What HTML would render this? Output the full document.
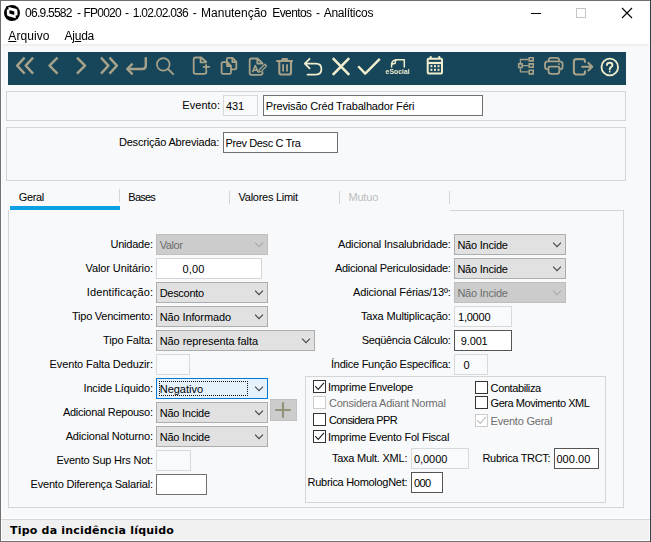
<!DOCTYPE html>
<html lang="pt-BR">
<head>
<meta charset="utf-8">
<title>Manutenção Eventos - Analíticos</title>
<style>
*{box-sizing:border-box;margin:0;padding:0}
html,body{width:651px;height:542px;overflow:hidden;background:#f8f9fa}
body{position:relative;font-family:"Liberation Sans",sans-serif;font-size:11px;color:#000;line-height:13px}
.a{position:absolute}
.t{position:absolute;white-space:nowrap;height:13px;line-height:13px}
.t u{text-decoration:underline;text-underline-offset:1px}
#toolbar{left:8px;top:52px;width:618px;height:33px;background:#17465b}
.panel{border:1px solid #d4d5d7}
.in{position:absolute;height:21px;background:#fff;border:1px solid #707070}
.in.ro{border-color:#d8d9da;background:#f9fafb}
.cb{position:absolute;height:21px;background:#e1e1e1;border:1px solid #adadad}
.cb.dis{background:#cccccc;border-color:#bfbfbf}
.cb.foc{background:#e5f1fb;border-color:#0078d7}
.cb svg{position:absolute;right:3px;top:7px}
.ck{position:absolute;width:13px;height:13px;background:#fff;border:1px solid #333}
.ck.dis{border-color:#cccccc;background:#fff}
.ck svg{position:absolute;left:0;top:0}
.sep{position:absolute;width:1px;height:13px;top:191px;background:#d4d5d7}
.ic{position:absolute;top:52px;height:33px;overflow:visible}
.s1{fill:none;stroke:#a7a289;stroke-width:1.8;stroke-linecap:round;stroke-linejoin:round}
.nav{stroke-width:2.4;stroke-linecap:butt}
.s2{fill:none;stroke:#f0eecc;stroke-width:1.6;stroke-linecap:round;stroke-linejoin:round}
</style>
</head>
<body>
<!-- window frame -->
<div class="a" style="left:0;top:0;width:651px;height:542px;background:#707070"></div>
<div class="a" style="left:650px;top:0;width:1px;height:542px;background:#35404d"></div>
<div class="a" style="left:1px;top:1px;width:649px;height:540px;background:#fff"></div>
<div class="a" style="left:2px;top:1px;width:647px;height:539px;background:#f8f9fa"></div>
<div class="a" style="left:1px;top:1px;width:649px;height:43px;background:#fff"></div>
<div class="a" style="left:2px;top:520px;width:647px;height:20px;background:#f0f0f0"></div>
<div class="a" style="left:1px;top:518px;width:649px;height:1px;background:#fff"></div>
<div class="a" style="left:1px;top:519px;width:649px;height:1px;background:#d7d7d7"></div>


<div class="a" style="left:2px;top:44px;width:647px;height:2px;background:#f0f0f0"></div>

<!-- app icon -->
<svg class="a" style="left:3px;top:4px" width="18" height="18" viewBox="0 0 18 18">
  <circle cx="9" cy="9" r="8" fill="#000"/>
  <g transform="translate(9.15 8.5) skewY(15)">
    <rect x="-5.3" y="-4.6" width="10.6" height="9.3" rx="1.8" fill="#fff"/>
    <rect x="-2.8" y="-1.6" width="5" height="3.5" rx=".7" fill="#000"/>
  </g>
  <rect x="3.2" y="2.2" width="2.3" height="3.3" fill="#000"/>
  <rect x="12.7" y="11.4" width="2.4" height="3.2" fill="#000"/>
</svg>

<!-- window buttons -->
<div class="a" style="left:531px;top:13px;width:10px;height:1px;background:#000"></div>
<div class="a" style="left:576px;top:8px;width:10px;height:10px;border:1px solid #c4c4c4"></div>
<svg class="a" style="left:621px;top:7px" width="12" height="12" viewBox="0 0 12 12"><path d="M1 1 L11 11 M11 1 L1 11" stroke="#000" stroke-width="1.1" fill="none"/></svg>

<!-- toolbar -->
<div class="a" id="toolbar"></div>
<svg class="a" style="left:0;top:0;will-change:transform" width="651" height="90" viewBox="0 0 651 90">
  <!-- first -->
  <path class="s1 nav" d="M24.6 57.6 L17.2 65.6 L24.6 73.6 M33.1 57.6 L25.7 65.6 L33.1 73.6"/>
  <!-- prev -->
  <path class="s1 nav" d="M57.5 57.6 L49.5 65.6 L57.5 73.6"/>
  <!-- next -->
  <path class="s1 nav" d="M77 57.6 L85 65.6 L77 73.6"/>
  <!-- last -->
  <path class="s1 nav" d="M101 57.6 L108.4 65.6 L101 73.6 M109.5 57.6 L116.9 65.6 L109.5 73.6"/>
  <!-- return -->
  <path class="s1 nav" d="M145.8 57.2 L145.8 65.5 Q145.8 69 142.3 69 L127.5 69 M132.6 63.7 L127.2 69 L132.6 74.3"/>
  <!-- search -->
  <circle class="s1" cx="163.3" cy="64.4" r="6.3" style="stroke-width:1.7"/>
  <path class="s1" style="stroke-width:1.8" d="M168 69 L173.2 74.2"/>
  <!-- new doc -->
  <path class="s1" d="M206.3 70.6 L206.3 72 Q206.3 73.9 204.4 73.9 L195.6 73.9 Q193.7 73.9 193.7 72 L193.7 59.4 Q193.7 57.5 195.6 57.5 L201.2 57.5 L206.3 62 M200.6 57.8 L200.6 62.4 L206 62.4"/>
  <path class="s1" style="stroke-linecap:butt" d="M202.8 66.9 L209.9 66.9 M206.1 64.2 L206.1 69.8"/>
  <!-- copy -->
  <path class="s1" d="M226.8 61.5 L226.8 59.3 Q226.8 57.9 228.2 57.9 L232.5 57.9 L236.3 61.7 L236.3 68 Q236.3 69.4 234.9 69.4 L231.3 69.4 M232.3 58.2 L232.3 62 L236 62"/>
  <path class="s1" d="M221.6 63.5 Q221.6 62.1 223 62.1 L227.3 62.1 L231 65.8 L231 72.4 Q231 73.8 229.6 73.8 L223 73.8 Q221.6 73.8 221.6 72.4 Z M227 62.4 L227 66 L230.7 66"/>
  <!-- edit doc -->
  <path class="s1" d="M262.5 72.2 L262.5 73 Q262.5 74.8 260.7 74.8 L251.5 74.8 Q249.7 74.8 249.7 73 L249.7 60.2 Q249.7 58.5 251.4 58.5 L257.5 58.5 L262.5 63.5 M257.3 58.8 L257.3 63.6 L262 63.6"/>
  <path class="s1" style="stroke-width:1.6;stroke-linecap:butt" d="M252.5 72.3 L255.3 65.6 L258.1 72.3 M253.4 70.2 L257.2 70.2"/>
  <path class="s1" style="stroke-width:1.3" d="M258.6 72.2 L259.2 69.8 L264.8 64.2 L266.6 66 L261 71.6 Z"/>
  <!-- trash -->
  <path class="s1" style="stroke-width:2;stroke-linecap:butt" d="M276.2 61 L292.9 61"/>
  <path d="M280.9 60.4 L282 58 L287.4 58 L288.5 60.4 Z" fill="#a7a289"/>
  <path class="s1" style="stroke-width:2.1" d="M279.3 61.6 L279.3 72.4 Q279.3 74.5 281.4 74.5 L288.9 74.5 Q291 74.5 291 72.4 L291 61.6"/>
  <path class="s1" style="stroke-width:1.8;stroke-linecap:butt" d="M283.1 64.2 L283.1 71.4 M287 64.2 L287 71.4"/>
  <!-- undo -->
  <path class="s2" style="stroke-width:1.8" d="M309.6 58.8 L304.8 63.6 L309.6 68.4 M305.2 63.6 L316 63.6 Q321.4 63.6 321.4 69.1 Q321.4 74.6 316 74.6 L307.5 74.6"/>
  <!-- cancel -->
  <path class="s2" style="stroke-width:2.6;stroke-linecap:butt" d="M332.8 58.2 L349.2 74.8 M349.2 58.2 L332.8 74.8"/>
  <!-- confirm -->
  <path class="s2" style="stroke-width:2.4;stroke-linecap:butt" d="M358.2 66.2 L365.2 73.6 L379.8 58.8"/>
  <!-- eSocial -->
  <path class="s2" style="stroke-width:1.5" d="M391.6 67 L391.6 64.4 Q391.8 60.4 396 59.7 L404.3 59.7 L404.3 67 M396.2 59.9 Q394.9 61 395.1 63.5 Q393.2 63.3 391.8 64.4"/>
  <text x="385.6" y="73.9" font-family="Liberation Sans, sans-serif" font-weight="bold" font-size="6.6" fill="#f0eecc" textLength="24.2" lengthAdjust="spacingAndGlyphs">eSocial</text>
  <!-- calendar -->
  <rect class="s2" style="stroke-width:2" x="427.7" y="58.7" width="14.3" height="14.8" rx="1"/>
  <path class="s2" style="stroke-width:2.2" d="M430.7 57 L430.7 58 M439.3 57 L439.3 58"/>
  <rect x="428" y="61.9" width="14" height="2.2" fill="#f0eecc"/>
  <g fill="#f0eecc">
    <rect x="430.4" y="65.2" width="2" height="2"/><rect x="434" y="65.2" width="2" height="2"/><rect x="437.5" y="65.2" width="2" height="2"/>
    <rect x="430.4" y="68.8" width="2" height="2"/><rect x="434" y="68.8" width="2" height="2"/><rect x="437.5" y="68.8" width="2" height="2"/>
  </g>
  <!-- hierarchy -->
  <path class="s1" style="stroke-width:1.6;stroke-linejoin:miter;stroke-linecap:butt" d="M518.7 63.9 H522.1 V67.5 H518.7 Z M529.2 57.8 H533.2 V60.9 H529.2 Z M529.2 63.9 H533.2 V67.2 H529.2 Z M529.2 70.2 H533.2 V73.9 H529.2 Z"/>
  <path class="s1" style="stroke-width:1.3;stroke-linejoin:miter;stroke-linecap:butt" d="M520.4 63.2 V59.5 H528.6 M522.8 65.6 H528.6 M520.4 68.2 V71.8 H528.6"/>
  <!-- print -->
  <path class="s1" d="M548.8 61 L548.8 60 Q548.8 57.8 551 57.8 L556.8 57.8 Q559 57.8 559 60 L559 61 M548.2 69.3 L547.6 69.3 Q545 69.3 545 66.7 L545 64.2 Q545 61.4 547.8 61.4 L559.8 61.4 Q562.6 61.4 562.6 64.2 L562.6 66.7 Q562.6 69.3 560 69.3 L559.4 69.3 M549.5 66.6 L558.3 66.6 Q559.3 66.6 559.3 67.6 L559.3 71.3 Q559.3 73.9 556.7 73.9 L551.1 73.9 Q548.5 73.9 548.5 71.3 L548.5 67.6 Q548.5 66.6 549.5 66.6 Z"/>
  <rect x="558.2" y="63.3" width="1.6" height="1.6" fill="#a7a289"/>
  <!-- exit -->
  <path class="s1" style="stroke-width:2.1" d="M585 62 L585 61.3 Q585 59.1 582.8 59.1 L576.3 59.1 Q573.9 59.1 573.9 61.5 L573.9 72.1 Q573.9 74.5 576.3 74.5 L582.8 74.5 Q585 74.5 585 72.3 L585 71.4 M582.2 66.7 L592 66.7 M588.4 63 L592.2 66.7 L588.4 70.4"/>
  <!-- help -->
  <circle class="s2" style="stroke-width:1.8" cx="609.8" cy="67" r="8.3"/>
  <path class="s2" style="stroke-width:1.9" d="M607 65 Q607 62.7 609.7 62.7 Q612.4 62.7 612.4 65 Q612.4 66.3 611 67.1 Q609.7 67.9 609.7 69.4"/>
  <rect x="608.9" y="70.8" width="1.6" height="1.6" fill="#f0eecc"/>
</svg>

<!-- panels -->
<div class="a panel" style="left:6px;top:91px;width:620px;height:30px"></div>
<div class="a panel" style="left:6px;top:127px;width:620px;height:54px"></div>
<div class="in ro" style="left:223px;top:95px;width:35px"></div>
<div class="in" style="left:263px;top:95px;width:220px"></div>
<div class="in" style="left:223px;top:132px;width:115px"></div>

<!-- tabs -->
<div class="sep" style="left:119px;top:189px"></div>
<div class="sep" style="left:229px"></div>
<div class="sep" style="left:339px"></div>
<div class="sep" style="left:449px"></div>
<div class="a" style="left:10px;top:206px;width:110px;height:4px;background:#0d9fe3"></div>

<!-- tab page -->
<div class="a" style="left:8px;top:210px;width:616px;height:298px;border:1px solid #d4d5d7;border-top:none"></div>
<div class="a" style="left:450px;top:210px;width:174px;height:1px;background:#d4d5d7"></div>

<!-- left column fields -->
<div class="cb dis" style="left:156px;top:234px;width:112px"><svg width="10" height="6" viewBox="0 0 10 6"><path d="M1.1 .7 L5 4.7 L9 .7" fill="none" stroke="#ababab" stroke-width="1.1"/></svg></div>
<div class="in ro" style="left:156px;top:258px;width:106px;background:#fff;border-color:#d4d5d7"></div>
<div class="cb" style="left:156px;top:282px;width:112px"><svg width="10" height="6" viewBox="0 0 10 6"><path d="M1.1 .7 L5 4.7 L9 .7" fill="none" stroke="#444" stroke-width="1.1"/></svg></div>
<div class="cb" style="left:156px;top:306px;width:112px"><svg width="10" height="6" viewBox="0 0 10 6"><path d="M1.1 .7 L5 4.7 L9 .7" fill="none" stroke="#444" stroke-width="1.1"/></svg></div>
<div class="cb" style="left:156px;top:330px;width:159px"><svg width="10" height="6" viewBox="0 0 10 6"><path d="M1.1 .7 L5 4.7 L9 .7" fill="none" stroke="#444" stroke-width="1.1"/></svg></div>
<div class="in ro" style="left:156px;top:354px;width:34px"></div>
<div class="cb foc" style="left:156px;top:378px;width:112px"><svg width="10" height="6" viewBox="0 0 10 6"><path d="M1.1 .7 L5 4.7 L9 .7" fill="none" stroke="#444" stroke-width="1.1"/></svg>
  <div class="a" style="left:2px;top:2px;width:89px;height:15px;border:1px dotted #111;border-radius:1px"></div></div>
<div class="cb" style="left:156px;top:402px;width:112px"><svg width="10" height="6" viewBox="0 0 10 6"><path d="M1.1 .7 L5 4.7 L9 .7" fill="none" stroke="#444" stroke-width="1.1"/></svg></div>
<div class="cb" style="left:156px;top:426px;width:112px"><svg width="10" height="6" viewBox="0 0 10 6"><path d="M1.1 .7 L5 4.7 L9 .7" fill="none" stroke="#444" stroke-width="1.1"/></svg></div>
<div class="in ro" style="left:156px;top:450px;width:35px"></div>
<div class="in" style="left:156px;top:474px;width:51px"></div>
<!-- plus button -->
<div class="a" style="left:270px;top:399px;width:27px;height:22px;background:#cccccc;border:1px solid #c2c2c2">
  <svg class="a" style="left:0;top:0" width="25" height="20" viewBox="0 0 25 20"><path d="M4.3 10 H19.7 M12 2.2 V17.8" stroke="#93937a" stroke-width="2.2" fill="none"/></svg>
</div>

<!-- right column fields -->
<div class="cb" style="left:454px;top:234px;width:112px"><svg width="10" height="6" viewBox="0 0 10 6"><path d="M1.1 .7 L5 4.7 L9 .7" fill="none" stroke="#444" stroke-width="1.1"/></svg></div>
<div class="cb" style="left:454px;top:258px;width:112px"><svg width="10" height="6" viewBox="0 0 10 6"><path d="M1.1 .7 L5 4.7 L9 .7" fill="none" stroke="#444" stroke-width="1.1"/></svg></div>
<div class="cb dis" style="left:454px;top:282px;width:112px"><svg width="10" height="6" viewBox="0 0 10 6"><path d="M1.1 .7 L5 4.7 L9 .7" fill="none" stroke="#ababab" stroke-width="1.1"/></svg></div>
<div class="in ro" style="left:454px;top:306px;width:58px"></div>
<div class="in" style="left:454px;top:330px;width:58px;border-color:#555"></div>
<div class="in ro" style="left:454px;top:354px;width:34px"></div>

<!-- group box -->
<div class="a" style="left:305px;top:376px;width:301px;height:127px;border:1px solid #d4d5d7"></div>
<div class="ck" style="left:313px;top:380px"><svg width="11" height="11" viewBox="0 0 11 11"><path d="M1.2 5.2 L4.2 8.4 L10 1.8" fill="none" stroke="#222" stroke-width="1.1"/></svg></div>
<div class="ck dis" style="left:313px;top:396px"></div>
<div class="ck" style="left:313px;top:413px"></div>
<div class="ck" style="left:313px;top:430px"><svg width="11" height="11" viewBox="0 0 11 11"><path d="M1.2 5.2 L4.2 8.4 L10 1.8" fill="none" stroke="#222" stroke-width="1.1"/></svg></div>
<div class="ck" style="left:475px;top:381px"></div>
<div class="ck" style="left:475px;top:396px"></div>
<div class="ck dis" style="left:475px;top:414px"><svg width="11" height="11" viewBox="0 0 11 11"><path d="M1.2 5.2 L4.2 8.4 L10 1.8" fill="none" stroke="#bdbdbd" stroke-width="1.1"/></svg></div>
<div class="in ro" style="left:411px;top:448px;width:58px"></div>
<div class="in" style="left:554px;top:448px;width:45px;border-color:#555"></div>
<div class="in" style="left:411px;top:472px;width:32px;border-color:#555"></div>

<div class="t" style="left:25.04px;top:5px;letter-spacing:-0.750px;font-size:12px;height:16px;line-height:16px">06.9.5582</div>
<div class="t" style="left:76.90px;top:5px;letter-spacing:0.000px;font-size:12px;height:16px;line-height:16px">-</div>
<div class="t" style="left:83.45px;top:5px;letter-spacing:-0.750px;font-size:12px;height:16px;line-height:16px">FP0020</div>
<div class="t" style="left:125.00px;top:5px;letter-spacing:0.000px;font-size:12px;height:16px;line-height:16px">-</div>
<div class="t" style="left:132.84px;top:5px;letter-spacing:-0.750px;font-size:12px;height:16px;line-height:16px">1.02.02.036</div>
<div class="t" style="left:192.80px;top:5px;letter-spacing:0.000px;font-size:12px;height:16px;line-height:16px">-</div>
<div class="t" style="left:201.10px;top:5px;letter-spacing:-0.019px;font-size:12px;height:16px;line-height:16px">Manutenção</div>
<div class="t" style="left:272.30px;top:5px;letter-spacing:-0.610px;font-size:12px;height:16px;line-height:16px">Eventos</div>
<div class="t" style="left:316.00px;top:5px;letter-spacing:0.000px;font-size:12px;height:16px;line-height:16px">-</div>
<div class="t" style="left:323.70px;top:5px;letter-spacing:-0.258px;font-size:12px;height:16px;line-height:16px">Analíticos</div>
<div class="t" style="left:8.30px;top:28px;letter-spacing:0.081px;font-size:12px;height:16px;line-height:16px"><u>A</u>rquivo</div>
<div class="t" style="left:64.60px;top:28px;letter-spacing:-0.254px;font-size:12px;height:16px;line-height:16px">Aj<u>u</u>da</div>
<div class="t" style="left:182.30px;top:99px;letter-spacing:0.059px">Evento:</div>
<div class="t" style="left:226.00px;top:100px;letter-spacing:-0.118px">431</div>
<div class="t" style="left:265.80px;top:100px;letter-spacing:-0.162px">Previsão Créd Trabalhador Féri</div>
<div class="t" style="left:118.90px;top:136px;letter-spacing:-0.184px">Descrição Abreviada:</div>
<div class="t" style="left:225.50px;top:137px;letter-spacing:-0.376px">Prev Desc C Tra</div>
<div class="t" style="left:18.70px;top:191px;letter-spacing:-0.364px">Geral</div>
<div class="t" style="left:128.31px;top:191px;letter-spacing:-0.750px">Bases</div>
<div class="t" style="left:238.60px;top:191px;letter-spacing:-0.275px">Valores Limit</div>
<div class="t" style="left:348.40px;top:191px;letter-spacing:-0.164px;color:#bbbcbe">Mutuo</div>
<div class="t" style="left:110.50px;top:238px;letter-spacing:-0.225px">Unidade:</div>
<div class="t" style="left:85.60px;top:262px;letter-spacing:-0.109px">Valor Unitário:</div>
<div class="t" style="left:86.80px;top:286px;letter-spacing:0.103px">Identificação:</div>
<div class="t" style="left:72.00px;top:310px;letter-spacing:-0.242px">Tipo Vencimento:</div>
<div class="t" style="left:103.00px;top:334px;letter-spacing:-0.160px">Tipo Falta:</div>
<div class="t" style="left:49.60px;top:358px;letter-spacing:-0.121px">Evento Falta Deduzir:</div>
<div class="t" style="left:83.50px;top:382px;letter-spacing:-0.150px">Incide Líquido:</div>
<div class="t" style="left:62.90px;top:406px;letter-spacing:-0.278px">Adicional Repouso:</div>
<div class="t" style="left:65.70px;top:430px;letter-spacing:-0.155px">Adicional Noturno:</div>
<div class="t" style="left:56.50px;top:454px;letter-spacing:-0.212px">Evento Sup Hrs Not:</div>
<div class="t" style="left:30.50px;top:478px;letter-spacing:-0.189px">Evento Diferença Salarial:</div>
<div class="t" style="left:159.70px;top:239px;letter-spacing:-0.425px;color:#6d6d6d">Valor</div>
<div class="t" style="left:182.60px;top:263px;letter-spacing:0.136px">0,00</div>
<div class="t" style="left:159.70px;top:287px;letter-spacing:-0.293px">Desconto</div>
<div class="t" style="left:159.70px;top:311px;letter-spacing:-0.112px">Não Informado</div>
<div class="t" style="left:159.70px;top:335px;letter-spacing:-0.066px">Não representa falta</div>
<div class="t" style="left:159.70px;top:383px;letter-spacing:0.000px">Negativo</div>
<div class="t" style="left:159.70px;top:407px;letter-spacing:-0.241px">Não Incide</div>
<div class="t" style="left:159.70px;top:431px;letter-spacing:-0.241px">Não Incide</div>
<div class="t" style="left:338.00px;top:238px;letter-spacing:-0.171px">Adicional Insalubridade:</div>
<div class="t" style="left:335.00px;top:262px;letter-spacing:-0.294px">Adicional Periculosidade:</div>
<div class="t" style="left:353.00px;top:286px;letter-spacing:-0.138px">Adicional Férias/13º:</div>
<div class="t" style="left:361.00px;top:310px;letter-spacing:-0.171px">Taxa Multiplicação:</div>
<div class="t" style="left:361.70px;top:334px;letter-spacing:-0.331px">Seqüência Cálculo:</div>
<div class="t" style="left:331.00px;top:358px;letter-spacing:-0.254px">Índice Função Específica:</div>
<div class="t" style="left:457.40px;top:239px;letter-spacing:-0.230px">Não Incide</div>
<div class="t" style="left:457.40px;top:263px;letter-spacing:-0.230px">Não Incide</div>
<div class="t" style="left:457.40px;top:287px;letter-spacing:-0.230px;color:#6d6d6d">Não Incide</div>
<div class="t" style="left:458.00px;top:311px;letter-spacing:-0.225px">1,0000</div>
<div class="t" style="left:460.80px;top:335px;letter-spacing:-0.152px">9.001</div>
<div class="t" style="left:463.50px;top:359px;letter-spacing:0.000px">0</div>
<div class="t" style="left:328.00px;top:381px;letter-spacing:-0.242px">Imprime Envelope</div>
<div class="t" style="left:329.00px;top:397px;letter-spacing:-0.248px;color:#6d6d6d">Considera Adiant Normal</div>
<div class="t" style="left:329.00px;top:414px;letter-spacing:-0.597px">Considera PPR</div>
<div class="t" style="left:328.00px;top:431px;letter-spacing:-0.238px">Imprime Evento Fol Fiscal</div>
<div class="t" style="left:490.60px;top:382px;letter-spacing:-0.390px">Contabiliza</div>
<div class="t" style="left:490.60px;top:397px;letter-spacing:-0.451px">Gera Movimento XML</div>
<div class="t" style="left:490.60px;top:415px;letter-spacing:-0.214px;color:#6d6d6d">Evento Geral</div>
<div class="t" style="left:331.90px;top:452px;letter-spacing:-0.236px">Taxa Mult. XML:</div>
<div class="t" style="left:413.90px;top:453px;letter-spacing:-0.025px">0,0000</div>
<div class="t" style="left:482.50px;top:452px;letter-spacing:-0.322px">Rubrica TRCT:</div>
<div class="t" style="left:556.40px;top:453px;letter-spacing:0.075px">000.00</div>
<div class="t" style="left:307.60px;top:476px;letter-spacing:-0.294px">Rubrica HomologNet:</div>
<div class="t" style="left:413.90px;top:477px;letter-spacing:-0.568px">000</div>
<div class="t" style="left:10.00px;top:524px;letter-spacing:0.206px;font-weight:bold;font-family:'DejaVu Sans',sans-serif">Tipo da incidência líquido</div>
</body>
</html>
